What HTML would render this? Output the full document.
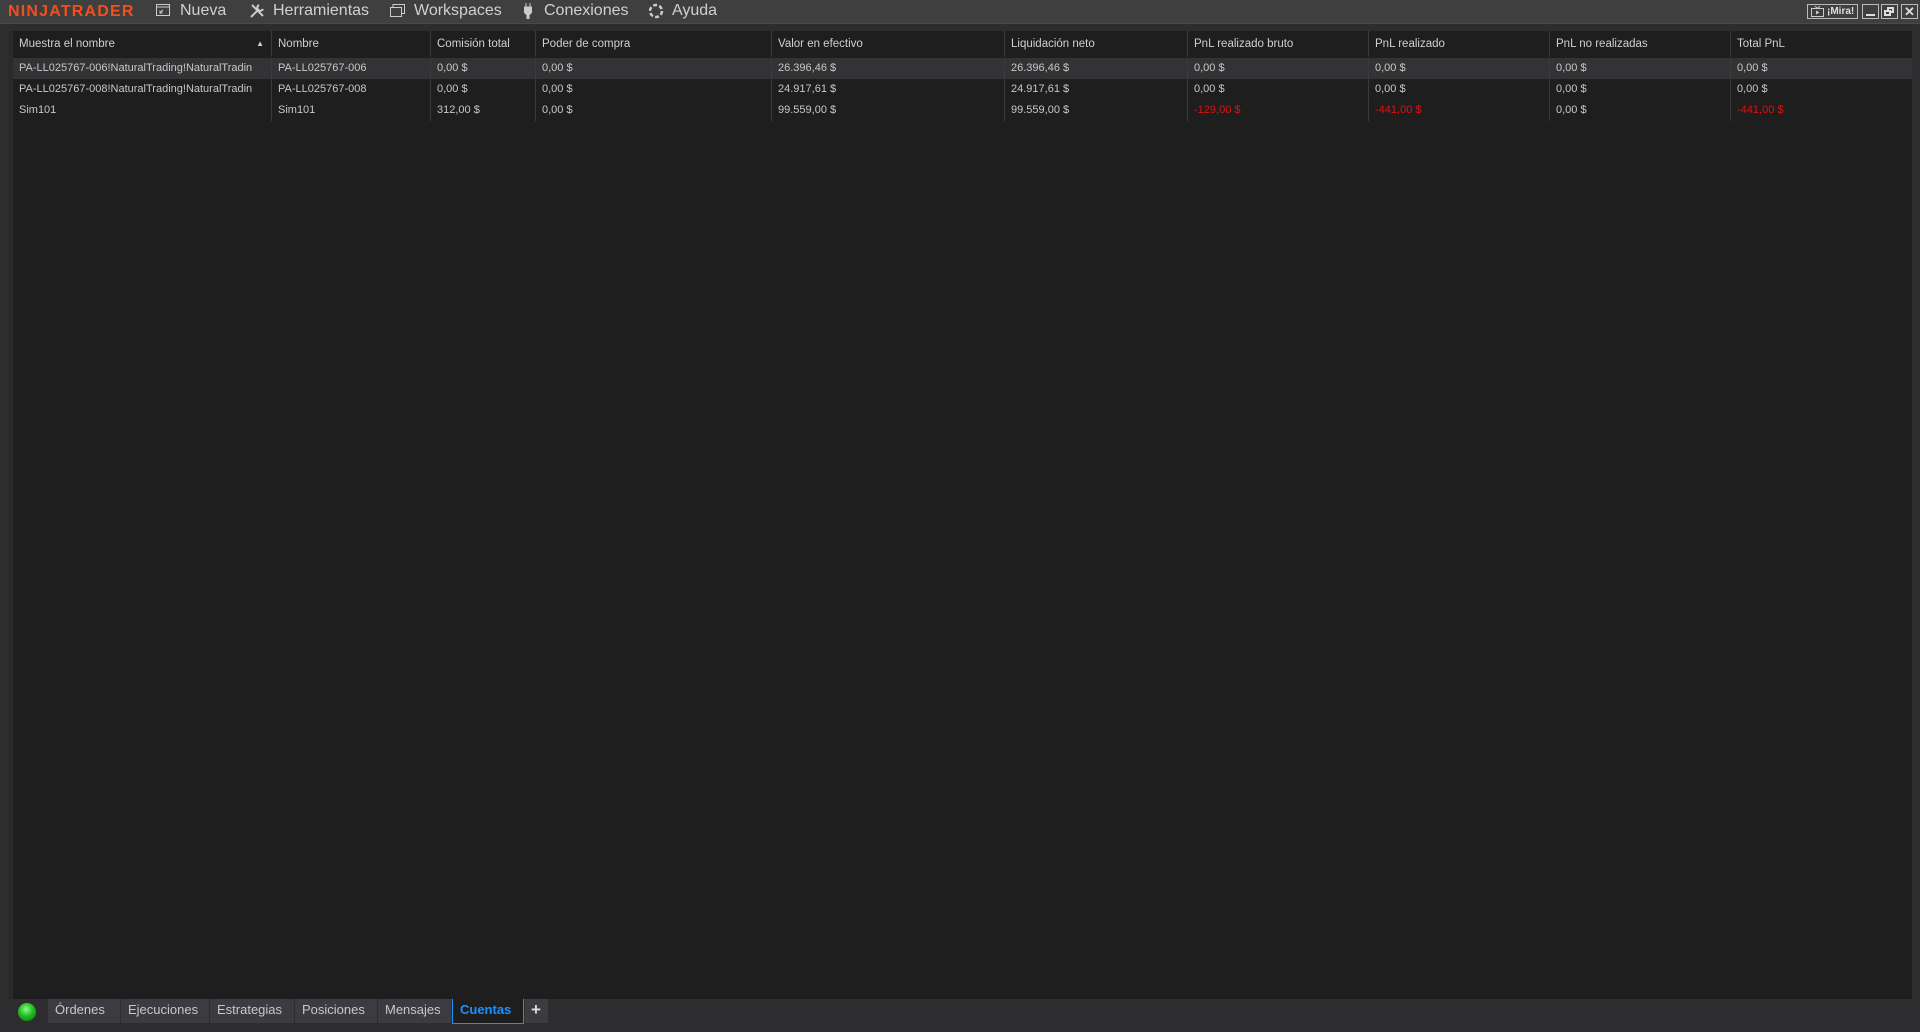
<!DOCTYPE html>
<html><head><meta charset="utf-8">
<style>
*{margin:0;padding:0;box-sizing:border-box}
body{width:1920px;height:1032px;background:#2d2d30;font-family:"Liberation Sans",sans-serif;overflow:hidden;position:relative;color:#c8c8c8}
#title{position:absolute;left:0;top:0;width:1920px;height:24px;background:#3f3f3f;border-bottom:1px solid #4a4a4a}
.logo{position:absolute;left:8px;top:3px;font-weight:bold;font-size:16px;color:#f0501e;letter-spacing:1.2px}
.menu{position:absolute;top:2px;font-size:16px;color:#d0d0d0}
.ico{position:absolute;top:4px}
.wc{position:absolute;top:4px;height:15px;border:1px solid #bbb;color:#ddd;font-size:10px;font-weight:bold;line-height:13px}
#grid{position:absolute;left:8px;top:31px;width:1904px;height:968px;background:#1e1e1e;border-left:5px solid #2a2a2a}
.row{position:absolute;left:0;width:1899px;height:21px;font-size:11px;line-height:21px}
.c{position:absolute;top:0;height:100%;padding-left:6px;border-left:1px solid #3a3a3a;white-space:nowrap;overflow:hidden}
.hdr{top:0;height:26px;line-height:26px;font-size:11.5px;color:#d0d0d0}
.red{color:#e01010}
#tabs{position:absolute;top:999px;left:0;width:1920px;height:33px}
.tab{position:absolute;top:0;height:24px;background:#3b3b40;color:#c8c8c8;font-size:13px;line-height:21px;padding-left:7px}
</style></head><body>
<div id="title">
 <div class="logo">NINJATRADER</div>
 <svg class="ico" style="left:156px" width="14" height="13" viewBox="0 0 14 13"><rect x="0.5" y="0.5" width="13" height="11" fill="none" stroke="#ccc"/><line x1="1" y1="3" x2="13" y2="3" stroke="#ccc"/><path d="M4 9 L7 6 M4 6.5 V9 H6.5" stroke="#ccc" fill="none"/></svg>
 <div class="menu" style="left:180px">Nueva</div>
 <svg class="ico" style="left:249px;top:3px" width="16" height="16" viewBox="0 0 16 16"><path d="M2 14 L10 6 M3 2 L14 13 M10 2 a3 3 0 1 0 4 4" stroke="#ccc" stroke-width="2" fill="none"/></svg>
 <div class="menu" style="left:273px">Herramientas</div>
 <svg class="ico" style="left:390px" width="15" height="13" viewBox="0 0 15 13"><rect x="0.5" y="3.5" width="11" height="9" fill="none" stroke="#ccc"/><path d="M3 3 V0.5 H14.5 V9.5 H12" fill="none" stroke="#ccc"/></svg>
 <div class="menu" style="left:414px">Workspaces</div>
 <svg class="ico" style="left:524px;top:3px" width="8" height="16" viewBox="0 0 8 16"><path d="M2 0 V4 M6 0 V4 M0 4 H8 V9 L5 12 V16 H3 V12 L0 9 Z" fill="#ccc" stroke="#ccc"/></svg>
 <div class="menu" style="left:544px">Conexiones</div>
 <svg class="ico" style="left:648px;top:3px" width="16" height="16" viewBox="0 0 16 16"><circle cx="8" cy="8" r="6" fill="none" stroke="#ccc" stroke-width="2.5" stroke-dasharray="4 2.3"/></svg>
 <div class="menu" style="left:672px">Ayuda</div>
 <div class="wc" style="left:1807px;width:51px"><svg style="position:absolute;left:3px;top:1px" width="13" height="11" viewBox="0 0 13 11"><rect x="0.5" y="2.5" width="12" height="8" fill="none" stroke="#ccc"/><path d="M5 4.5 L8.5 6.5 L5 8.5Z" fill="#ccc"/><path d="M4 0 L6.5 2.5 L9 0" stroke="#ccc" fill="none"/></svg><span style="position:absolute;left:19px">¡Mira!</span></div>
 <div class="wc" style="left:1862px;width:17px"><div style="position:absolute;left:3px;top:9px;width:9px;height:2px;background:#ddd"></div></div>
 <div class="wc" style="left:1881px;width:17px"><div style="position:absolute;left:5px;top:2px;width:7px;height:6px;border:2px solid #ddd"></div><div style="position:absolute;left:2px;top:5px;width:7px;height:6px;border:2px solid #ddd;background:#3f3f3f"></div></div>
 <div class="wc" style="left:1901px;width:17px;font-size:13px;text-align:center;line-height:13px">✕</div>
</div>
<div id="grid">
 <div class="row hdr" style="top:0">
  <div class="c" style="left:0;width:258px;border-left:none">Muestra el nombre<span style="position:absolute;right:7px;font-size:8px">▲</span></div>
  <div class="c" style="left:258px;width:159px">Nombre</div>
  <div class="c" style="left:417px;width:105px">Comisión total</div>
  <div class="c" style="left:522px;width:236px">Poder de compra</div>
  <div class="c" style="left:758px;width:233px">Valor en efectivo</div>
  <div class="c" style="left:991px;width:183px">Liquidación neto</div>
  <div class="c" style="left:1174px;width:181px">PnL realizado bruto</div>
  <div class="c" style="left:1355px;width:181px">PnL realizado</div>
  <div class="c" style="left:1536px;width:181px">PnL no realizadas</div>
  <div class="c" style="left:1717px;width:182px">Total PnL</div>
 </div>
 <div class="row" style="top:27px;background:#333335">
  <div class="c" style="left:0;width:258px;border-left:none">PA-LL025767-006!NaturalTrading!NaturalTradin</div>
  <div class="c" style="left:258px;width:159px">PA-LL025767-006</div>
  <div class="c" style="left:417px;width:105px">0,00 $</div>
  <div class="c" style="left:522px;width:236px">0,00 $</div>
  <div class="c" style="left:758px;width:233px">26.396,46 $</div>
  <div class="c" style="left:991px;width:183px">26.396,46 $</div>
  <div class="c" style="left:1174px;width:181px">0,00 $</div>
  <div class="c" style="left:1355px;width:181px">0,00 $</div>
  <div class="c" style="left:1536px;width:181px">0,00 $</div>
  <div class="c" style="left:1717px;width:182px">0,00 $</div>
 </div>
 <div class="row" style="top:48px">
  <div class="c" style="left:0;width:258px;border-left:none">PA-LL025767-008!NaturalTrading!NaturalTradin</div>
  <div class="c" style="left:258px;width:159px">PA-LL025767-008</div>
  <div class="c" style="left:417px;width:105px">0,00 $</div>
  <div class="c" style="left:522px;width:236px">0,00 $</div>
  <div class="c" style="left:758px;width:233px">24.917,61 $</div>
  <div class="c" style="left:991px;width:183px">24.917,61 $</div>
  <div class="c" style="left:1174px;width:181px">0,00 $</div>
  <div class="c" style="left:1355px;width:181px">0,00 $</div>
  <div class="c" style="left:1536px;width:181px">0,00 $</div>
  <div class="c" style="left:1717px;width:182px">0,00 $</div>
 </div>
 <div class="row" style="top:69px">
  <div class="c" style="left:0;width:258px;border-left:none">Sim101</div>
  <div class="c" style="left:258px;width:159px">Sim101</div>
  <div class="c" style="left:417px;width:105px">312,00 $</div>
  <div class="c" style="left:522px;width:236px">0,00 $</div>
  <div class="c" style="left:758px;width:233px">99.559,00 $</div>
  <div class="c" style="left:991px;width:183px">99.559,00 $</div>
  <div class="c red" style="left:1174px;width:181px">-129,00 $</div>
  <div class="c red" style="left:1355px;width:181px">-441,00 $</div>
  <div class="c" style="left:1536px;width:181px">0,00 $</div>
  <div class="c red" style="left:1717px;width:182px">-441,00 $</div>
 </div>
</div>
<div id="tabs">
 <div style="position:absolute;left:18px;top:4px;width:18px;height:18px;border-radius:50%;background:radial-gradient(circle at 45% 35%,#8f8,#2b2 45%,#070)"></div>
 <div class="tab" style="left:48px;width:72px">Órdenes</div>
 <div class="tab" style="left:121px;width:88px">Ejecuciones</div>
 <div class="tab" style="left:210px;width:84px">Estrategias</div>
 <div class="tab" style="left:295px;width:82px">Posiciones</div>
 <div class="tab" style="left:378px;width:73px">Mensajes</div>
 <div class="tab" style="left:452px;width:72px;height:25px;background:#1e1e1e;border:1px solid #1e8fff;border-top:none;color:#1e8fff;font-weight:bold">Cuentas</div>
 <div class="tab" style="left:525px;width:23px;font-size:17px;font-weight:bold;padding-left:6px;color:#ddd">+</div>
</div>
</body></html>
